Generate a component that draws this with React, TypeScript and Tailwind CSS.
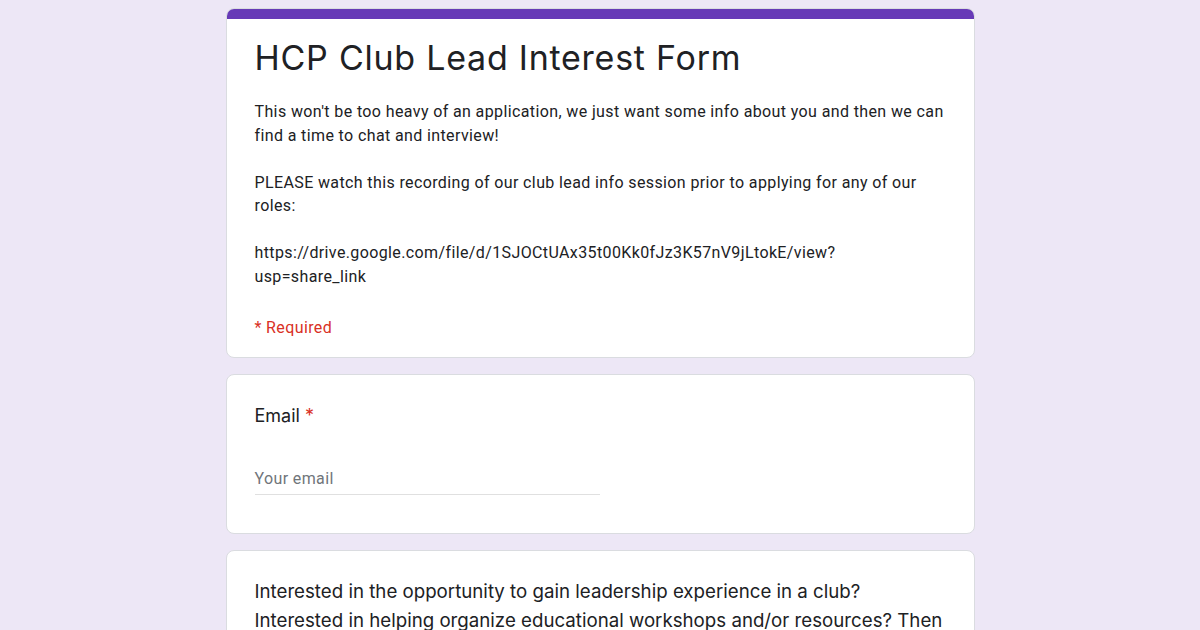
export default function App() {
  return (
    <div className="min-h-[630px] w-full bg-[#ede7f6] pt-2 flex flex-col items-center gap-4" style={{ fontFamily: "Roboto, 'Liberation Sans', sans-serif" }}>
      <div className="w-[749px] bg-white rounded-lg border border-[#dadce0] overflow-hidden">
        <div className="h-[10px] bg-[#673ab7]" />
        <div className="px-[28px] pt-[19px] pb-[19px]">
          <h1 className="text-[34px] leading-[40px] text-[#202124] font-normal tracking-[0.75px]" style={{ fontFamily: "Inter, sans-serif" }}>HCP Club Lead Interest Form</h1>
          <div className="mt-[22px] text-[16px] leading-[23.5px] text-[#202124] tracking-[0.38px]">
            <p>This won't be too heavy of an application, we just want some info about you and then we can find a time to chat and interview!</p>
            <p className="mt-[23.5px]">PLEASE watch this recording of our club lead info session prior to applying for any of our roles:</p>
            <p className="mt-[23.5px]">https://drive.google.com/file/d/1SJOCtUAx35t00Kk0fJz3K57nV9jLtokE/view?<br />usp=share_link</p>
          </div>
          <div className="mt-[30px] text-[16px] leading-[20px] text-[#d93025] tracking-[0.38px]">* Required</div>
        </div>
      </div>
      <div className="w-[749px] bg-white rounded-lg border border-[#dadce0] px-[28px] pt-[29px] pb-[38px]">
        <div className="text-[18px] leading-[24px] text-[#202124]" style={{ fontFamily: "Inter, sans-serif" }}>Email <span className="text-[#d93025]">*</span></div>
        <div className="mt-[41px] w-[345px] border-b border-[#e0e0e0] pb-[5px] text-[16px] leading-[20px] text-[#70757a] tracking-[0.38px]">Your email</div>
      </div>
      <div className="w-[749px] bg-white rounded-lg border border-[#dadce0] px-[28px] pt-[26px] pb-[24px]">
        <div className="text-[18.7px] leading-[29px] text-[#202124]" style={{ fontFamily: "Inter, sans-serif" }}>
          Interested in the opportunity to gain leadership experience in a club? Interested in helping organize educational workshops and/or resources? Then apply to be a club lead!
        </div>
      </div>
    </div>
  );
}
